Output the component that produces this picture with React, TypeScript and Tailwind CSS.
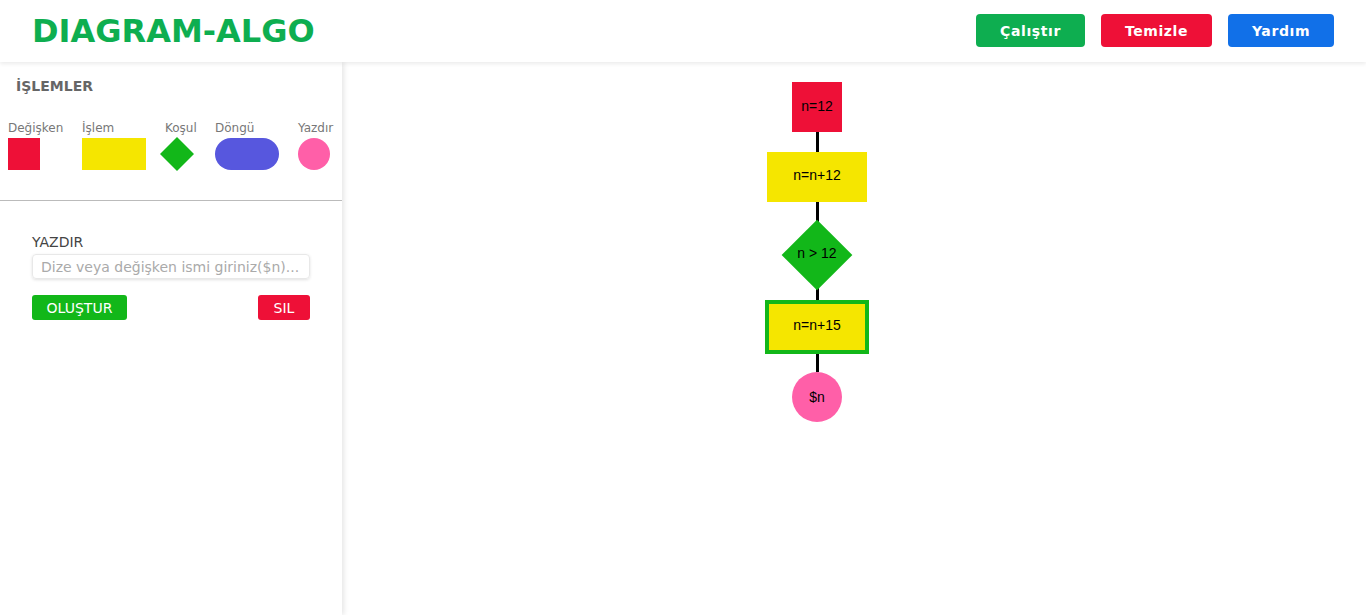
import React from "react";

const font = { fontFamily: '"DejaVu Sans", sans-serif' };

const Line = ({ h }: { h: string }) => <div className={`w-[3px] bg-black ${h}`}></div>;

const App = () => {
  const tools = [
    { label: "Değişken", w: "w-[55px]", shape: <div className="w-8 h-8 bg-[#ee1037]"></div> },
    { label: "İşlem", w: "w-16", shape: <div className="w-16 h-8 bg-[#f5e600]"></div> },
    { label: "Koşul", w: "w-[31px]", shape: <div className="w-6 h-6 bg-[#12b719] rotate-45"></div> },
    { label: "Döngü", w: "w-16", shape: <div className="w-16 h-8 bg-[#5757de] rounded-full"></div> },
    { label: "Yazdır", w: "w-[35px]", shape: <div className="w-8 h-8 bg-[#ff5fa8] rounded-full"></div> },
  ];

  return (
    <div className="h-screen w-full flex flex-col bg-white overflow-hidden" style={font}>
      <header className="h-[62px] shrink-0 flex items-center justify-between px-8 relative z-20 shadow-[0_2px_4px_rgba(0,0,0,0.08)] bg-white">
        <h1 className="text-[32px] font-bold text-[#0eae50] leading-none">DIAGRAM-ALGO</h1>
        <div className="flex gap-4 -mt-px">
          <button className="h-[33px] w-[109px] rounded bg-[#0eae50] text-white text-sm font-bold tracking-[0.6px]">
            Çalıştır
          </button>
          <button className="h-[33px] w-[111px] rounded bg-[#ee1037] text-white text-sm font-bold tracking-[0.6px]">
            Temizle
          </button>
          <button className="h-[33px] w-[106px] rounded bg-[#1170e8] text-white text-sm font-bold tracking-[0.6px]">
            Yardım
          </button>
        </div>
      </header>

      <div className="flex flex-1 min-h-0">
        <aside className="w-[342px] shrink-0 relative z-10 bg-white shadow-[2px_0_5px_rgba(0,0,0,0.1)]">
          <div className="pt-[14px] px-4 text-sm leading-5 font-bold text-[#666]">İŞLEMLER</div>
          <div className="flex gap-[19px] px-2 mt-6">
            {tools.map((t) => (
              <div key={t.label} className={`flex flex-col shrink-0 ${t.w}`}>
                <span className="text-xs leading-4 text-[#777] whitespace-nowrap">{t.label}</span>
                <div className="h-8 mt-0.5 flex items-center">{t.shape}</div>
              </div>
            ))}
          </div>
          <div className="mt-[30px] h-px bg-[#bbb]"></div>
          <div className="px-8 pt-[31px]">
            <div className="text-sm leading-5 text-[#444]">YAZDIR</div>
            <input
              type="text"
              placeholder="Dize veya değişken ismi giriniz($n)..."
              className="mt-0.5 w-[278px] h-[25px] px-2 text-sm border border-[#e8e8e8] rounded shadow-[0_1px_3px_rgba(0,0,0,0.12)] outline-none placeholder:text-[#aaa]"
            />
            <div className="mt-4 w-[278px] flex justify-between">
              <button className="w-[95px] h-[25px] rounded-[3px] bg-[#12b719] text-white text-sm">OLUŞTUR</button>
              <button className="w-[52px] h-[25px] rounded-[3px] bg-[#ee1037] text-white text-sm">SIL</button>
            </div>
          </div>
        </aside>

        <main className="flex-1 relative">
          <div
            className="ml-[423px] pt-5 w-[104px] flex flex-col items-center text-sm text-black"
            style={{ fontFamily: '"Liberation Sans", Arial, sans-serif' }}
          >
            <div className="w-[50px] h-[50px] bg-[#ee1037] flex items-center justify-center pb-0.5">n=12</div>
            <Line h="h-5" />
            <div className="w-[100px] h-[50px] bg-[#f5e600] flex items-center justify-center pb-1">n=n+12</div>
            <Line h="h-7" />
            <div className="w-[50px] h-[50px] relative flex items-center justify-center">
              <div className="absolute inset-0 bg-[#12b719] rotate-45"></div>
              <span className="relative pb-1">n &gt; 12</span>
            </div>
            <Line h="h-5" />
            <div className="w-[104px] h-[54px] border-4 border-[#12b719] bg-[#f5e600] flex items-center justify-center pb-1">
              n=n+15
            </div>
            <Line h="h-[18px]" />
            <div className="w-[50px] h-[50px] rounded-full bg-[#ff5fa8] flex items-center justify-center">$n</div>
          </div>
        </main>
      </div>
    </div>
  );
};

export default App;
